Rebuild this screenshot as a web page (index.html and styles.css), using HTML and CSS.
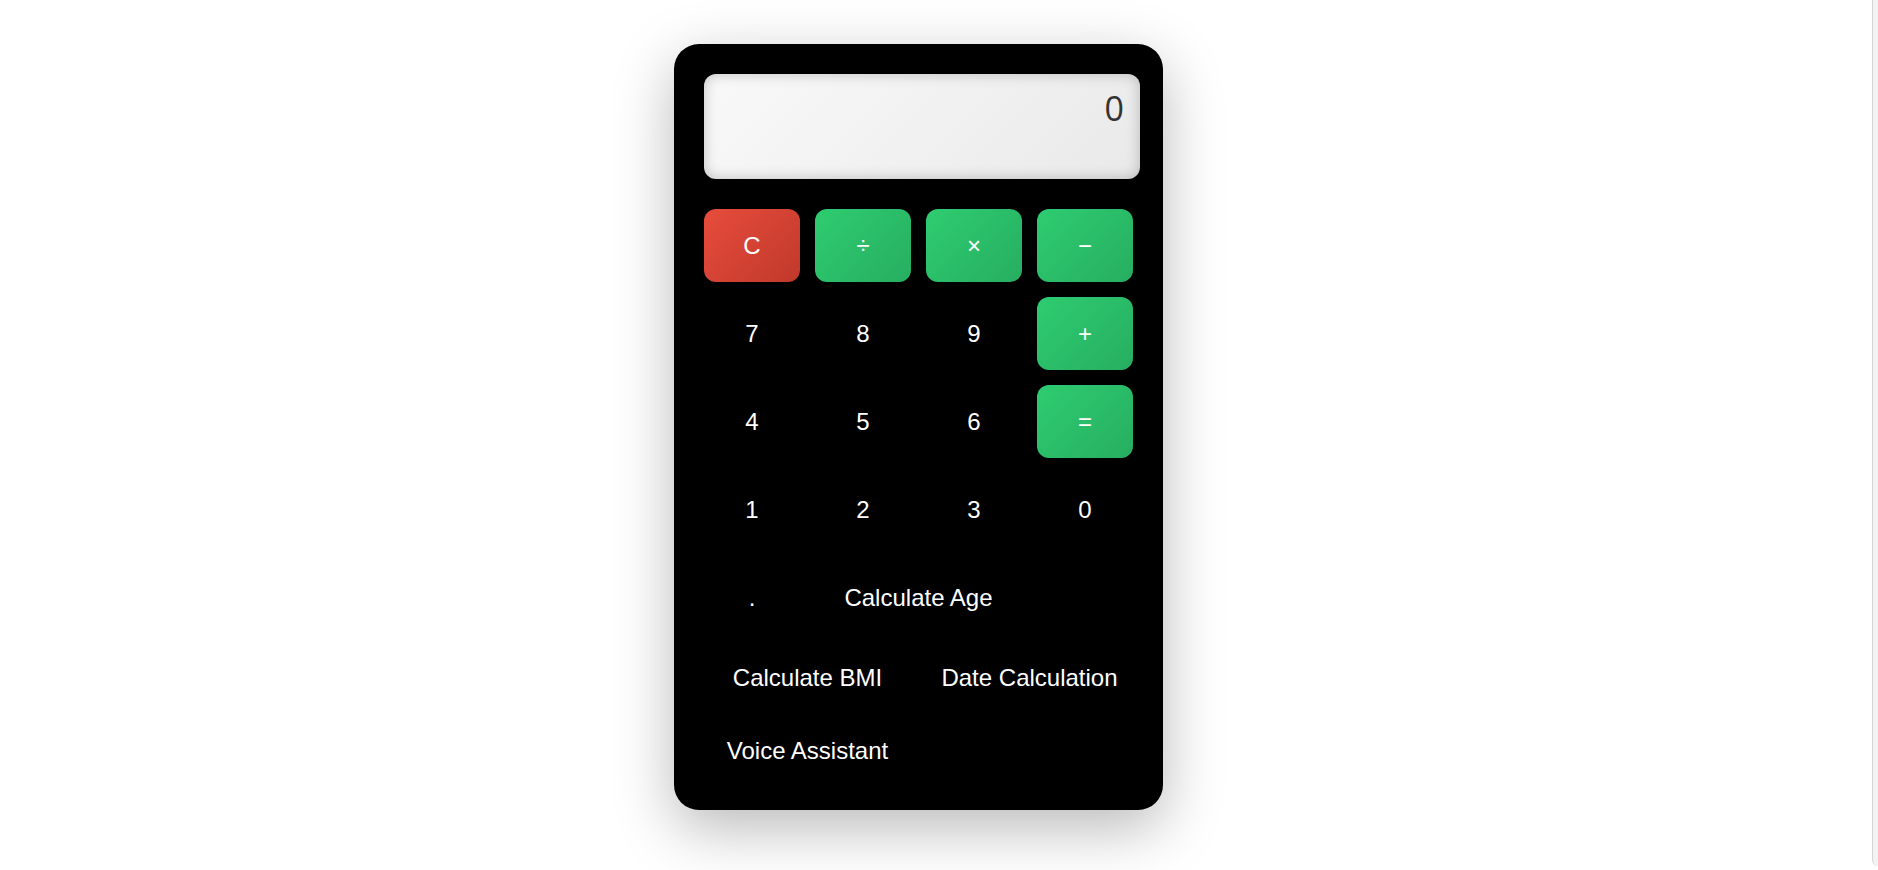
FILE: index.html
```html
<!DOCTYPE html>
<html lang="en">
<head>
<meta charset="utf-8">
<title>Calculator</title>
<link rel="stylesheet" href="styles.css">
</head>
<body>
<div class="page">
  <div class="calculator">
    <div class="display">0</div>
    <div class="keys">
      <button class="key clear">C</button>
      <button class="key op">÷</button>
      <button class="key op">×</button>
      <button class="key op">−</button>
      <button class="key">7</button>
      <button class="key">8</button>
      <button class="key">9</button>
      <button class="key op">+</button>
      <button class="key">4</button>
      <button class="key">5</button>
      <button class="key">6</button>
      <button class="key op">=</button>
      <button class="key">1</button>
      <button class="key">2</button>
      <button class="key">3</button>
      <button class="key">0</button>
      <button class="key">.</button>
      <button class="key fn">Calculate Age</button>
      <button class="key fn">Calculate BMI</button>
      <button class="key fn">Date Calculation</button>
      <button class="key fn">Voice Assistant</button>
    </div>
  </div>
</div>
<div class="edge"></div>
</body>
</html>
```

FILE: styles.css
```css
html, body {
  margin: 0;
  padding: 0;
  background: #ffffff;
  font-family: "Liberation Sans", Arial, sans-serif;
}

.page {
  box-sizing: border-box;
  min-height: 870px;
  display: flex;
  justify-content: center;
  align-items: flex-start;
  padding: 44px 41px 0 0;
}

.calculator {
  width: 429px;
  padding: 30px;
  background: #000000;
  border-radius: 25px;
  box-shadow: 0 18px 60px rgba(0, 0, 0, 0.28);
}

.display {
  height: 105px;
  box-sizing: border-box;
  margin-right: -7px;
  margin-bottom: 30px;
  padding: 11px 16px;
  border-radius: 12px;
  background: linear-gradient(135deg, #f9f9f9, #e9e9e9);
  box-shadow: inset 0 0 14px rgba(0, 0, 0, 0.22);
  color: #333333;
  font-family: "Open Sans", "Noto Sans", sans-serif;
  font-size: 34px;
  text-align: right;
}

.keys {
  display: grid;
  grid-template-columns: repeat(4, 96px);
  column-gap: 15px;
  row-gap: 15px;
}

.key {
  height: 73px;
  padding: 0;
  border: none;
  border-radius: 12px;
  background: transparent;
  color: #ffffff;
  font-family: "Liberation Sans", Arial, sans-serif;
  font-size: 24px;
  cursor: pointer;
}

.key.op {
  background: linear-gradient(135deg, #2ecc71, #27ae60);
  box-shadow: 0 4px 8px rgba(0, 0, 0, 0.3);
}

.key.clear {
  background: linear-gradient(135deg, #e74c3c, #c0392b);
  box-shadow: 0 4px 8px rgba(0, 0, 0, 0.3);
}

.key.fn {
  grid-column: span 2;
  height: 58px;
  align-self: center;
}

.edge {
  position: fixed;
  top: 0;
  right: 0;
  width: 5px;
  height: 866px;
  border-left: 1px solid #d6d6d6;
  border-bottom-left-radius: 6px;
  background: #f3f3f3;
}
```
